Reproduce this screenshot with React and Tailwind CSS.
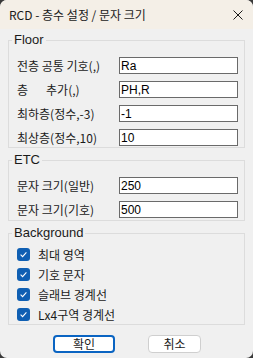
import { useState } from 'react';

const KR = { fontFamily: '"Noto Sans CJK KR", "Liberation Sans", sans-serif' };

const FLOOR_ROWS = [
  { label: '전층 공통 기호(,)', value: 'Ra' },
  { label: 'gap', value: 'PH,R' },
  { label: '최하층(정수,-3)', value: '-1' },
  { label: '최상층(정수,10)', value: '10' },
];

const ETC_ROWS = [
  { label: '문자 크기(일반)', value: '250' },
  { label: '문자 크기(기호)', value: '500' },
];

const BG_ITEMS = ['최대 영역', '기호 문자', '슬래브 경계선', 'Lx4구역 경계선'];

function Field({ label, value }) {
  const [v, setV] = useState(value);
  return (
    <div className="flex h-[17px] items-center">
      <div className="w-[110px] pl-[8px] text-[12px] leading-[17px] text-[#1a1a1a]" style={KR}>
        {label === 'gap' ? (
          <>
            <span>층</span>
            <span className="ml-[18px]">추가(,)</span>
          </>
        ) : (
          label
        )}
      </div>
      <input
        value={v}
        onChange={(e) => setV(e.target.value)}
        className="h-[17px] w-[119px] border border-[#6a6a6a] bg-white px-[1px] text-[12px] leading-[15px] text-black outline-none"
        style={{ fontFamily: '"Liberation Sans", sans-serif' }}
      />
    </div>
  );
}

function Group({ title, className, children }) {
  return (
    <fieldset className={`border border-[#dcdcdc] ${className}`}>
      <legend
        className="ml-[3px] px-[2px] text-[13px] leading-[14px] text-[#1a1a1a]"
        style={{ fontFamily: '"Liberation Sans", sans-serif' }}
      >
        {title}
      </legend>
      {children}
    </fieldset>
  );
}

function Check({ label }) {
  const [on, setOn] = useState(true);
  return (
    <label className="flex h-[13px] cursor-default items-center gap-[8px] pl-[8px]">
      <button
        type="button"
        onClick={() => setOn(!on)}
        className={`flex h-[13px] w-[13px] items-center justify-center rounded-[3px] ${
          on ? 'bg-[#0f5fb3]' : 'border border-[#8a8a8a] bg-white'
        }`}
      >
        {on && (
          <svg width="9" height="9" viewBox="0 0 9 9" fill="none">
            <path d="M1.6 4.7 L3.6 6.6 L7.4 2.4" stroke="#ffffff" strokeWidth="1.1" />
          </svg>
        )}
      </button>
      <span className="text-[12px] leading-[13px] text-[#1a1a1a]" style={KR}>
        {label}
      </span>
    </label>
  );
}

export default function App() {
  return (
    <div className="h-[358px] w-[253px] bg-[#3a3a3a]">
      <div className="flex h-full w-full flex-col overflow-hidden rounded-[7px] bg-[#f0f0f0]">
        <div className="flex h-[29px] items-center justify-between bg-[#f4efe7] pl-[9px] pr-[10px]">
          <span className="text-[12px] leading-[14px] text-[#1a1a1a]" style={KR}>
            RCD - 층수 설정 / 문자 크기
          </span>
          <svg width="10" height="10" viewBox="0 0 10 10" fill="none">
            <path d="M0.5 0.5 L9.5 9.5 M9.5 0.5 L0.5 9.5" stroke="#1a1a1a" strokeWidth="1" />
          </svg>
        </div>

        <div className="flex flex-col px-[8px]">
          <Group title="Floor" className="mt-[4px] pb-[1px] pt-[10px]">
            <div className="flex flex-col gap-[7px]">
              {FLOOR_ROWS.map((r) => (
                <Field key={r.label} {...r} />
              ))}
            </div>
          </Group>

          <Group title="ETC" className="mt-[5px] pb-[2px] pt-[10px]">
            <div className="flex flex-col gap-[7px]">
              {ETC_ROWS.map((r) => (
                <Field key={r.label} {...r} />
              ))}
            </div>
          </Group>

          <Group title="Background" className="mt-[5px] pb-[3px] pt-[8px]">
            <div className="flex flex-col gap-[7px]">
              {BG_ITEMS.map((t) => (
                <Check key={t} label={t} />
              ))}
            </div>
          </Group>

          <div className="mt-[10px] flex">
            <button
              className="ml-[45px] h-[18px] w-[62px] rounded-[4px] border-2 border-[#0a64c2] bg-white text-[12px] leading-[14px] text-[#1a1a1a]"
              style={KR}
            >
              확인
            </button>
            <button
              className="ml-[33px] h-[18px] w-[53px] rounded-[4px] border border-[#cfcfcf] bg-white text-[12px] leading-[14px] text-[#1a1a1a]"
              style={KR}
            >
              취소
            </button>
          </div>
        </div>
      </div>
    </div>
  );
}
